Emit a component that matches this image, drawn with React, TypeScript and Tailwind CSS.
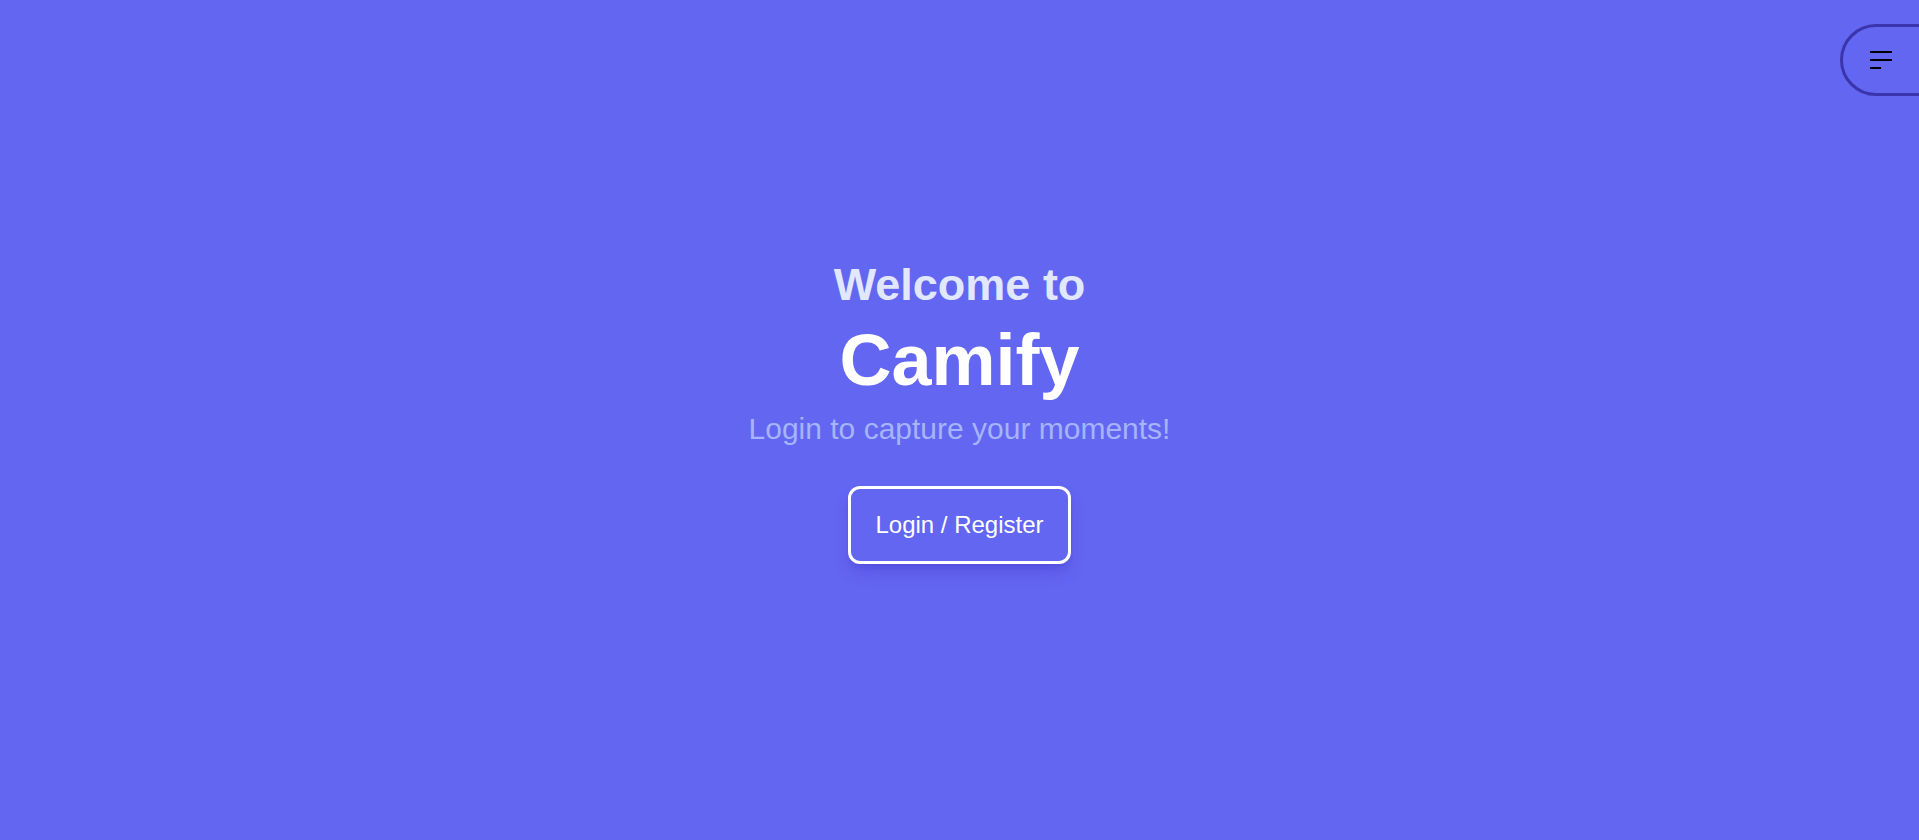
import React from "react";

function MenuButton() {
  return (
    <button className="fixed top-6 left-[1840px] h-[72px] w-[120px] rounded-full border-[3px] border-[#3b34ad] flex items-center pl-[27px]">
      <svg width="22" height="18" viewBox="0 0 22 18" fill="none">
        <path d="M0 1H22M0 9H22M0 17H11" stroke="#000" strokeWidth="2.2" />
      </svg>
    </button>
  );
}

export default function App() {
  return (
    <div
      className="min-h-screen h-[840px] bg-[#6366f1] overflow-hidden"
      style={{ fontFamily: '"Liberation Sans", Arial, sans-serif' }}
    >
      <MenuButton />
      <main className="flex flex-col items-center pt-[259px] text-center">
        <h2 className="text-[45px] leading-[52px] font-bold text-[#e0e7ff]">Welcome to</h2>
        <h1 className="mt-[9px] text-[72px] leading-[80px] font-bold text-white">Camify</h1>
        <p className="mt-[11px] text-[30px] leading-[36px] text-[#a5b4fc]">Login to capture your moments!</p>
        <button className="mt-[39px] px-6 py-5 border-[3px] border-white rounded-xl text-2xl leading-8 text-white shadow-lg shadow-[#4338ca]/40">
          Login / Register
        </button>
      </main>
    </div>
  );
}
